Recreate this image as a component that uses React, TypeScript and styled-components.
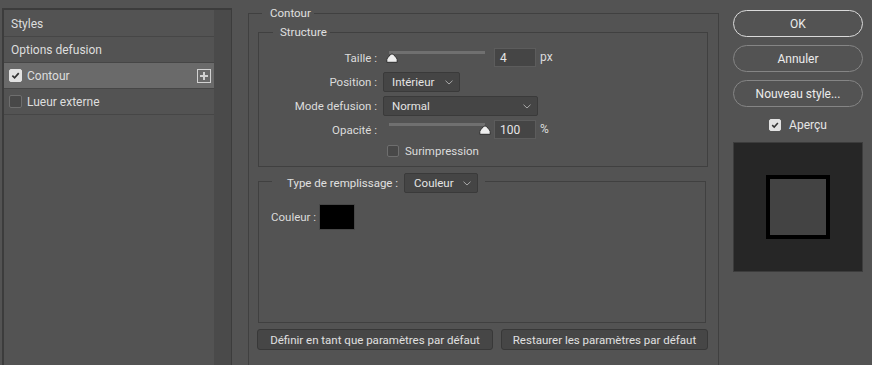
import React from "react";
import styled, { createGlobalStyle } from "styled-components";

const Global = createGlobalStyle`
  html, body { margin: 0; padding: 0; background: #535353; overflow: hidden; }
  body { font-family: Roboto, "Noto Sans", "Liberation Sans", sans-serif; font-size: 11.5px; color: #dcdcdc; }
  * { box-sizing: border-box; }
`;

const Page = styled.div`
  display: flex;
  align-items: flex-start;
  height: 100vh;
`;

/* ---------- left styles list ---------- */
const StylesPanel = styled.div`
  margin: 8px 0 0 2px;
  width: 230px;
  height: calc(100vh - 8px);
  display: flex;
  border-top: 2px solid #3c3c3c;
  border-left: 2px solid #3c3c3c;
  border-right: 1px solid #3c3c3c;
`;

const StyleList = styled.div`
  width: 210px;
  padding-top: 1px;
  display: flex;
  flex-direction: column;
`;

const StyleRow = styled.div<{ $active?: boolean; $indent?: number }>`
  height: 26px;
  display: flex;
  align-items: center;
  gap: 5px;
  padding-left: ${(p) => p.$indent ?? 7}px;
  padding-right: 3px;
  border-bottom: 1px solid #464646;
  background: ${(p) => (p.$active ? "#6a6a6a" : "transparent")};
  color: #dedede;
  font-size: 12px;
  white-space: nowrap;
`;

const RowLabel = styled.span`
  flex: 1;
`;

const Scrollbar = styled.div`
  width: 17px;
  background: #4a4a4a;
`;

/* ---------- checkbox ---------- */
const Box = styled.span<{ $checked?: boolean; $size: number }>`
  width: ${(p) => p.$size}px;
  height: ${(p) => p.$size}px;
  flex: none;
  display: inline-flex;
  align-items: center;
  justify-content: center;
  border-radius: 2px;
  background: ${(p) => (p.$checked ? "#e2e2e2" : "#484848")};
  border: 1px solid ${(p) => (p.$checked ? "#e2e2e2" : "#6e6e6e")};
`;

const CheckBox = ({ checked, size = 12 }: { checked?: boolean; size?: number }) => (
  <Box $checked={checked} $size={size}>
    {checked && (
      <svg width={size - 4} height={size - 4} viewBox="0 0 10 10">
        <path d="M1.5 5.2 L4 7.6 L8.6 2.4" fill="none" stroke="#333" strokeWidth="1.9" />
      </svg>
    )}
  </Box>
);

const PlusIcon = () => (
  <svg width="14" height="14" viewBox="0 0 14 14">
    <rect x="0.5" y="0.5" width="13" height="13" fill="none" stroke="#d2d2d2" strokeWidth="1" />
    <path d="M7 3 V11 M3 7 H11" stroke="#d2d2d2" strokeWidth="2" />
  </svg>
);

/* ---------- main groups ---------- */
const Main = styled.div`
  margin-left: 16px;
  padding-top: 13px;
  width: 471px;
  height: 100vh;
  display: flex;
  flex-direction: column;
`;

const Group = styled.div<{ $height?: number; $open?: boolean; $mr?: number }>`
  border: 1px solid #404040;
  ${(p) => (p.$open ? "border-bottom: none; flex: 1;" : "")}
  ${(p) => (p.$height ? `height: ${p.$height}px;` : "")}
  margin-right: ${(p) => p.$mr ?? 0}px;
  display: flex;
  flex-direction: column;
`;

const Inner = styled.div<{ $top: number }>`
  margin-top: ${(p) => p.$top}px;
`;

const Legend = styled.div<{ $ml: number; $pl: number; $pr: number; $h?: number; $gap?: number }>`
  align-self: flex-start;
  display: flex;
  align-items: center;
  gap: ${(p) => p.$gap ?? 3}px;
  height: ${(p) => p.$h ?? 16}px;
  margin: -9px 0 0 ${(p) => p.$ml}px;
  padding: 0 ${(p) => p.$pr}px 0 ${(p) => p.$pl}px;
  background: #535353;
  color: #e0e0e0;
  white-space: nowrap;
`;

const ContourGroup = styled(Group)`
  padding: 0 10px 0 9px;
`;

const FormGrid = styled.div`
  display: grid;
  grid-template-columns: 118px 1fr;
  grid-template-rows: 20px 20px 20px 20px 14px;
  column-gap: 6px;
  row-gap: 4px;
  margin-top: 8px;
  padding-bottom: 8px;
`;

const Label = styled.div`
  display: flex;
  align-items: center;
  justify-content: flex-end;
  white-space: nowrap;
  color: #dcdcdc;
`;

const Control = styled.div<{ $col?: number }>`
  display: flex;
  align-items: flex-start;
  ${(p) => (p.$col ? `grid-column: ${p.$col};` : "")}
`;

const SliderWrap = styled.div`
  position: relative;
  width: 108px;
  height: 20px;
  flex: none;
`;

const Track = styled.div`
  margin: 3px 0 0 6px;
  width: 96px;
  height: 3px;
  background: #707070;
`;

const Thumb = styled.svg`
  position: absolute;
  top: 5px;
`;

const Slider = ({ value, min, max }: { value: number; min: number; max: number }) => {
  const center = 8 + ((value - min) / (max - min)) * 94;
  return (
    <SliderWrap>
      <Track />
      <Thumb width="12" height="10" viewBox="0 0 12 10" style={{ left: center - 6 }}>
        <path
          d="M6 0.8 C7 0.8 11.2 5 11.2 6.6 V9.3 H0.8 V6.6 C0.8 5 5 0.8 6 0.8 Z"
          fill="#eeeeee"
          stroke="#2c2c2c"
          strokeWidth="1"
        />
      </Thumb>
    </SliderWrap>
  );
};

const NumInput = styled.div`
  margin-left: 3px;
  width: 42px;
  height: 19px;
  background: #454545;
  border: 1px solid #5c5c5c;
  color: #e6e6e6;
  font-size: 12px;
  display: flex;
  align-items: center;
  padding-left: 5px;
`;

const Unit = styled.span`
  margin-left: 4px;
  line-height: 19px;
  font-size: 12px;
  color: #dcdcdc;
`;

const SelectBox = styled.div<{ $w: number; $pl?: number }>`
  width: ${(p) => p.$w}px;
  height: 20px;
  flex: none;
  display: flex;
  align-items: center;
  justify-content: space-between;
  padding: 0 6px 0 ${(p) => p.$pl ?? 8}px;
  background: #454545;
  border: 1px solid #3a3a3a;
  border-radius: 2px;
  color: #e4e4e4;
`;

const Chevron = () => (
  <svg width="8" height="5" viewBox="0 0 8 5">
    <path d="M0.5 0.7 L4 4 L7.5 0.7" fill="none" stroke="#a8a8a8" strokeWidth="1" />
  </svg>
);

const Select = ({ w, label, pl }: { w: number; label: string; pl?: number }) => (
  <SelectBox $w={w} $pl={pl}>
    <span>{label}</span>
    <Chevron />
  </SelectBox>
);

const CheckLine = styled.label`
  display: flex;
  align-items: center;
  gap: 6px;
  margin-left: 4px;
  height: 14px;
  color: #dcdcdc;
`;

const ColorRow = styled.div`
  display: flex;
  align-items: center;
  margin-top: 11px;
  padding-left: 12px;
  gap: 3px;
`;

const Swatch = styled.div`
  width: 36px;
  height: 26px;
  background: #000;
  border: 1px solid #474747;
`;

const ButtonRow = styled.div`
  display: flex;
  gap: 8px;
  margin: 6px 0 0 -1px;
`;

const FlatButton = styled.button<{ $w: number }>`
  width: ${(p) => p.$w}px;
  height: 21px;
  padding: 0;
  background: #464646;
  border: 1px solid #383838;
  border-radius: 3px;
  color: #e0e0e0;
  font: inherit;
`;

/* ---------- right column ---------- */
const Side = styled.div`
  margin-left: 14px;
  padding-top: 10px;
  width: 130px;
  display: flex;
  flex-direction: column;
  gap: 8px;
`;

const PillButton = styled.button<{ $primary?: boolean }>`
  height: 27px;
  padding: 0;
  border-radius: 14px;
  background: transparent;
  border: ${(p) => (p.$primary ? "1.5px solid #dadada" : "1px solid #858585")};
  color: #ececec;
  font: inherit;
  font-size: 12px;
`;

const PreviewToggle = styled.label`
  display: flex;
  justify-content: center;
  align-items: center;
  gap: 8px;
  margin-top: 4px;
  height: 12px;
  font-size: 12px;
  color: #e6e6e6;
`;

const PreviewBox = styled.div`
  margin-top: 3px;
  width: 130px;
  height: 130px;
  background: #262626;
  border: 1px solid #3c3c3c;
  display: flex;
  align-items: center;
  justify-content: center;
`;

const PreviewSquare = styled.div`
  width: 64px;
  height: 64px;
  border: 4px solid #000;
  background: #434343;
`;

export default function App() {
  return (
    <>
      <Global />
      <Page>
        <StylesPanel>
          <StyleList>
            <StyleRow>Styles</StyleRow>
            <StyleRow>Options defusion</StyleRow>
            <StyleRow $active $indent={5}>
              <CheckBox checked size={13} />
              <RowLabel>Contour</RowLabel>
              <PlusIcon />
            </StyleRow>
            <StyleRow $indent={5}>
              <CheckBox size={13} />
              <RowLabel>Lueur externe</RowLabel>
            </StyleRow>
          </StyleList>
          <Scrollbar />
        </StylesPanel>

        <Main>
          <ContourGroup $open>
            <Legend $ml={4} $pl={8} $pr={3}>Contour</Legend>

            <Inner $top={11}>
              <Group>
                <Legend $ml={14} $pl={7} $pr={3}>Structure</Legend>
                <FormGrid>
                  <Label>Taille :</Label>
                  <Control>
                    <Slider value={4} min={1} max={250} />
                    <NumInput>4</NumInput>
                    <Unit>px</Unit>
                  </Control>

                  <Label>Position :</Label>
                  <Control>
                    <Select w={77} label="Intérieur" />
                  </Control>

                  <Label>Mode defusion :</Label>
                  <Control>
                    <Select w={155} label="Normal" />
                  </Control>

                  <Label>Opacité :</Label>
                  <Control>
                    <Slider value={100} min={0} max={100} />
                    <NumInput>100</NumInput>
                    <Unit>%</Unit>
                  </Control>

                  <Control $col={2}>
                    <CheckLine>
                      <CheckBox />
                      Surimpression
                    </CheckLine>
                  </Control>
                </FormGrid>
              </Group>
            </Inner>

            <Inner $top={14}>
              <Group $height={142} $mr={2}>
                <Legend $ml={13} $pl={15} $pr={7} $h={20} $gap={6}>
                  <span>Type de remplissage :</span>
                  <Select w={74} label="Couleur" pl={9} />
                </Legend>
                <ColorRow>
                  <span>Couleur :</span>
                  <Swatch />
                </ColorRow>
              </Group>
            </Inner>

            <ButtonRow>
              <FlatButton $w={236}>Définir en tant que paramètres par défaut</FlatButton>
              <FlatButton $w={207}>Restaurer les paramètres par défaut</FlatButton>
            </ButtonRow>
          </ContourGroup>
        </Main>

        <Side>
          <PillButton $primary>OK</PillButton>
          <PillButton>Annuler</PillButton>
          <PillButton>Nouveau style...</PillButton>
          <PreviewToggle>
            <CheckBox checked />
            Aperçu
          </PreviewToggle>
          <PreviewBox>
            <PreviewSquare />
          </PreviewBox>
        </Side>
      </Page>
    </>
  );
}
